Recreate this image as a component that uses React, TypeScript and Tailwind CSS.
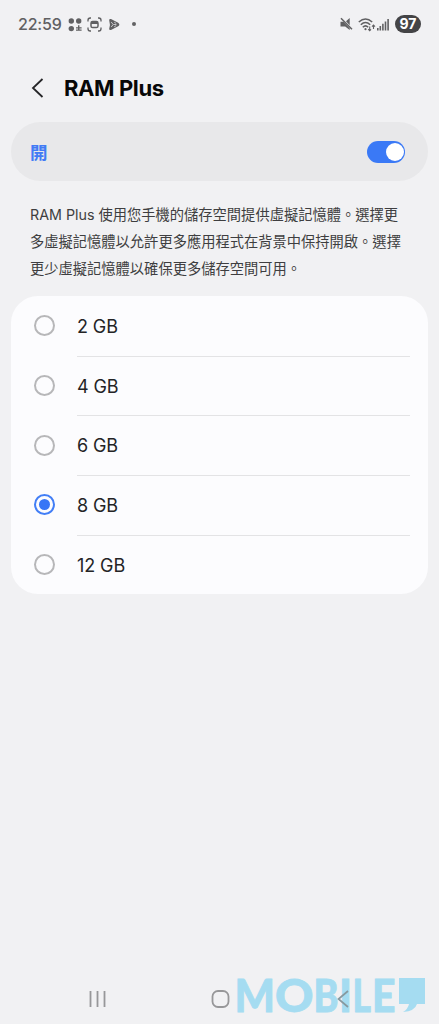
import { useState } from 'react';

const RAM_OPTIONS = [2, 4, 6, 8, 12];

const DESCRIPTION = [
  'RAM Plus 使用您手機的儲存空間提供虛擬記憶體。選擇更',
  '多虛擬記憶體以允許更多應用程式在背景中保持開啟。選擇',
  '更少虛擬記憶體以確保更多儲存空間可用。',
];

// x position and advance of each letter in the logo
const LOGO_LETTERS = [
  { char: 'M', x: -0.5, width: 40.5 },
  { char: 'O', x: 40, width: 38.5 },
  { char: 'B', x: 78.5, width: 25 },
  { char: 'I', x: 104, width: 13 },
  { char: 'L', x: 117.5, width: 18.5 },
  { char: 'E', x: 137, width: 23.5 },
];

function StatusBar() {
  return (
    <div className="flex h-[48px] items-center pr-[18px] pl-[18px] text-[#606062]">
      <span className="w-[50px] text-[16px] leading-6 font-medium tracking-[-0.2px] whitespace-nowrap">22:59</span>
      {/* quick share dots */}
      <svg width="14" height="15" viewBox="0 0 14 15" fill="currentColor">
        <circle cx="3.3" cy="4" r="2.7" />
        <circle cx="10.7" cy="4" r="2.7" />
        <circle cx="3.3" cy="11.6" r="2.7" />
        <path d="M10 8.2h1.4v2h2.2v1.3h-2.2v1h2.2v1.3H8v-1.3h2v-1H8v-1.3h2z" />
      </svg>
      {/* screen capture */}
      <svg width="15" height="15" viewBox="0 0 15 15" className="ml-[5px]" fill="none" stroke="currentColor" strokeWidth="1.3">
        <path d="M1 4.5V3.2Q1 1 3.2 1H4M11 1h.8Q14 1 14 3.2v1.3M14 10.5v1.3Q14 14 11.8 14H11M4 14h-.8Q1 14 1 11.8v-1.3" />
        <rect x="4" y="4.6" width="7" height="6" rx="1.6" strokeWidth="1.5" />
        <path d="M4 6h7" strokeWidth="2" />
      </svg>
      {/* play games */}
      <svg width="13" height="13" viewBox="0 0 13 13" className="ml-[6px]" fill="currentColor">
        <path d="M1.2 2.2Q1.2.4 3 1.1l7.2 3.6q2.3 1.8 0 3.6L3 11.9q-1.8.7-1.8-1.1Q2.6 6.5 1.2 2.2z" />
        <path d="m3.2 4 2 2.5-2 2.5M6.2 4.2l2 1.2M6.2 8.8l2-1.2M5.6 6.5h2.8" fill="none" stroke="#f1f1f3" strokeWidth=".7" />
      </svg>
      <span className="ml-[11px] h-1 w-1 rounded-full bg-[#626264]" />
      <div className="ml-auto flex items-center">
        {/* muted */}
        <svg width="13" height="14" viewBox="0 0 13 14" fill="currentColor">
          <path d="M.5 4.7h3l6.2 6.5V13L5.2 9.5H.5zM6 4.2 9.7 1v7.2z" />
          <path d="m1 1.3 11 11" stroke="currentColor" strokeWidth="1.5" />
        </svg>
        {/* wifi */}
        <svg width="18" height="15" viewBox="0 0 18 15" className="ml-[5px]" fill="none" stroke="currentColor" strokeWidth="1.5">
          <path d="M.8 5q6.7-6 13.4 0M2.8 7.7q4.7-4.4 9.4 0M4.8 10.2q2.7-2.6 5.4 0" />
          <circle cx="7.5" cy="12.2" r="1.1" fill="currentColor" stroke="none" />
          <path d="M11.7 9.5v4.3m-1.5-1.6 1.5 1.6 1.3-1.4M15.5 12V8m-1.5 1.6L15.5 8 17 9.6" strokeWidth="1.1" />
        </svg>
        {/* signal */}
        <svg width="12" height="13" viewBox="0 0 12 13" className="ml-[1px]" fill="currentColor">
          <path d="M0 10h1.6v2.5H0zM2.5 8h1.6v4.5H2.5zM5.1 5.8h1.6v6.7H5.1zM7.7 3.5h1.6v9H7.7zM10.3 1h1.6v11.5h-1.6z" />
        </svg>
        <span className="ml-[6px] flex h-[18px] w-[26px] items-center justify-center rounded-full bg-[#444446] text-[14px] leading-[18px] font-bold text-white">
          97
        </span>
      </div>
    </div>
  );
}

function Toggle({ on, onChange }: { on: boolean; onChange: () => void }) {
  return (
    <button
      role="switch"
      aria-checked={on}
      aria-label="RAM Plus"
      onClick={onChange}
      className={`flex h-[22px] w-[38px] items-center rounded-full px-[1.5px] ${on ? 'justify-end bg-[#3a79f6]' : 'justify-start bg-[#a5a5a8]'}`}
    >
      <span className="h-[18px] w-[18px] rounded-full bg-white" />
    </button>
  );
}

function Radio({ checked }: { checked: boolean }) {
  return (
    <span className={`flex h-[21px] w-[21px] shrink-0 items-center justify-center rounded-full border-2 ${checked ? 'border-[#427ef6]' : 'border-[#b7b7b9]'}`}>
      {checked && <span className="h-[11px] w-[11px] rounded-full bg-[#3876f6]" />}
    </span>
  );
}

function NavigationBar() {
  return (
    <div className="relative h-[50px]">
      <div className="flex h-full items-center pl-[89px] text-[#979799]">
        <svg width="17" height="18" viewBox="0 0 17 18" fill="none" stroke="currentColor" strokeWidth="1.8">
          <path d="M1.5 1v16M8.5 1v16M15.5 1v16" />
        </svg>
        <svg width="19" height="18" viewBox="0 0 19 18" className="ml-[105px]" fill="none" stroke="currentColor" strokeWidth="1.8">
          <rect x="1.5" y="1" width="16" height="16" rx="5.5" />
        </svg>
      </div>
      {/* site logo, laid over the navigation keys */}
      <svg width="204" height="66" viewBox="0 -16 204 66" className="absolute -top-4 left-[235px] overflow-visible">
        <g fill="#a5dcf1" className="font-['Lato','Liberation_Sans',sans-serif] font-black">
          <text y="37.5" fontSize="46.5" stroke="#a5dcf1" strokeWidth=".8">
            {LOGO_LETTERS.map(({ char, x, width }) => (
              <tspan key={char} x={x} textLength={width} lengthAdjust="spacingAndGlyphs">{char}</tspan>
            ))}
          </text>
          <path d="M164 4h26v26h-8q-2 7-14 8 5-3 6-8h-10z" />
        </g>
        <path d="m113 17-9.5 8 9.5 8" fill="none" stroke="#87999f" strokeWidth="1.7" />
      </svg>
    </div>
  );
}

export default function App() {
  const [enabled, setEnabled] = useState(true);
  const [selected, setSelected] = useState(8);

  return (
    <div className="flex h-[1024px] w-[439px] flex-col overflow-hidden bg-[#f1f1f3] font-['Inter','Noto_Sans_CJK_TC',sans-serif]">
      <StatusBar />

      <header className="flex h-[74px] items-center pt-[6px] pl-[31px]">
        <button aria-label="返回">
          <svg width="13" height="20" viewBox="0 0 13 20" fill="none" stroke="#252527" strokeWidth="1.8">
            <path d="M11.5 1 2 10l9.5 9" />
          </svg>
        </button>
        <h1 className="ml-[20px] text-[22px] leading-none font-bold tracking-[-0.4px] text-[#080808]">RAM Plus</h1>
      </header>

      <section className="mx-[11px] flex h-[59px] items-center justify-between rounded-full bg-[#e8e8ea] pr-[23px] pl-[19px]">
        <span className="mt-[3px] text-[17.5px] leading-6 font-bold text-[#427bf5]">開</span>
        <Toggle on={enabled} onChange={() => setEnabled(!enabled)} />
      </section>

      <p className="mt-[20px] ml-[30px] h-[95px] text-[14.28px] leading-[27px] text-[#3e3e40]">
        {DESCRIPTION.map((line) => (
          <span key={line} className="block whitespace-nowrap">{line}</span>
        ))}
      </p>

      <section className="mx-[11px] h-[298px] overflow-hidden rounded-[27px] bg-[#fcfcfe]">
        {RAM_OPTIONS.map((size, index) => (
          <button
            key={size}
            onClick={() => setSelected(size)}
            className="flex h-[59.7px] w-full items-center pr-[18px] pl-[23px] text-left"
          >
            <Radio checked={selected === size} />
            <span className={`mt-[2px] ml-[22px] flex h-full flex-1 items-center text-[18px] tracking-[-0.1px] text-[#242426] ${index < RAM_OPTIONS.length - 1 ? 'border-b-[1.5px] border-[#e3e3e5]' : ''}`}>
              {size} GB
            </span>
          </button>
        ))}
      </section>

      <div className="mt-auto">
        <NavigationBar />
      </div>
    </div>
  );
}
